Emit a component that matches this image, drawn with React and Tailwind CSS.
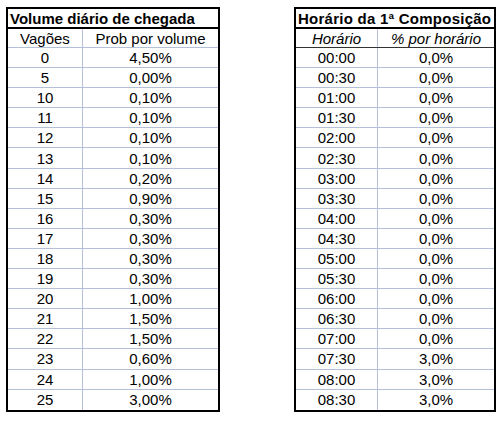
const volume = [
  ["0", "4,50%"],
  ["5", "0,00%"],
  ["10", "0,10%"],
  ["11", "0,10%"],
  ["12", "0,10%"],
  ["13", "0,10%"],
  ["14", "0,20%"],
  ["15", "0,90%"],
  ["16", "0,30%"],
  ["17", "0,30%"],
  ["18", "0,30%"],
  ["19", "0,30%"],
  ["20", "1,00%"],
  ["21", "1,50%"],
  ["22", "1,50%"],
  ["23", "0,60%"],
  ["24", "1,00%"],
  ["25", "3,00%"],
];

const horarios = [
  ["00:00", "0,0%"],
  ["00:30", "0,0%"],
  ["01:00", "0,0%"],
  ["01:30", "0,0%"],
  ["02:00", "0,0%"],
  ["02:30", "0,0%"],
  ["03:00", "0,0%"],
  ["03:30", "0,0%"],
  ["04:00", "0,0%"],
  ["04:30", "0,0%"],
  ["05:00", "0,0%"],
  ["05:30", "0,0%"],
  ["06:00", "0,0%"],
  ["06:30", "0,0%"],
  ["07:00", "0,0%"],
  ["07:30", "3,0%"],
  ["08:00", "3,0%"],
  ["08:30", "3,0%"],
];

const Sheet = ({ title, titleClass, head, rows, firstW, italicHead, headLine }) => (
  <div className="border-2 border-black bg-white">
    <div className="h-[20px] border-b-2 border-black flex items-center overflow-hidden whitespace-nowrap">
      <span className={`pl-[2px] text-[15px] font-bold leading-none text-black ${titleClass}`}>
        {title}
      </span>
    </div>
    <div className={`flex h-[19px] border-b ${headLine}`}>
      <div
        className={`shrink-0 border-r border-[#b4bfd9] flex items-center justify-center ${firstW}`}
      >
        <span className={`text-[15px] leading-none ${italicHead ? "italic" : ""}`}>
          {head[0]}
        </span>
      </div>
      <div className="flex-1 flex items-center justify-center">
        <span className={`text-[15px] leading-none ${italicHead ? "italic" : ""}`}>
          {head[1]}
        </span>
      </div>
    </div>
    {rows.map(([a, b], i) => (
      <div
        key={a}
        className={`flex h-[20.1px] ${
          i < rows.length - 1 ? "border-b border-[#b4bfd9]" : ""
        }`}
      >
        <div
          className={`shrink-0 border-r border-[#b4bfd9] flex items-center justify-center ${firstW}`}
        >
          <span className="text-[15px] leading-none">{a}</span>
        </div>
        <div className="flex-1 flex items-center justify-center">
          <span className="text-[15px] leading-none">{b}</span>
        </div>
      </div>
    ))}
  </div>
);

export default function App() {
  return (
    <div
      className="w-[500px] h-[421px] bg-white text-black flex items-start pt-[7px]"
      style={{ fontFamily: '"Liberation Sans", Arial, sans-serif' }}
    >
      <div className="ml-[6px] w-[214px]">
        <Sheet
          title="Volume diário de chegada"
          titleClass=""
          head={["Vagões", "Prob por volume"]}
          rows={volume}
          firstW="w-[75px]"
          headLine="border-[#b4bfd9]"
        />
      </div>
      <div className="ml-[74px] w-[202px]">
        <Sheet
          title="Horário da 1ª Composição"
          titleClass="tracking-[0.25px]"
          head={["Horário", "% por horário"]}
          rows={horarios}
          firstW="w-[82px]"
          italicHead
          headLine="border-[#333333]"
        />
      </div>
    </div>
  );
}
